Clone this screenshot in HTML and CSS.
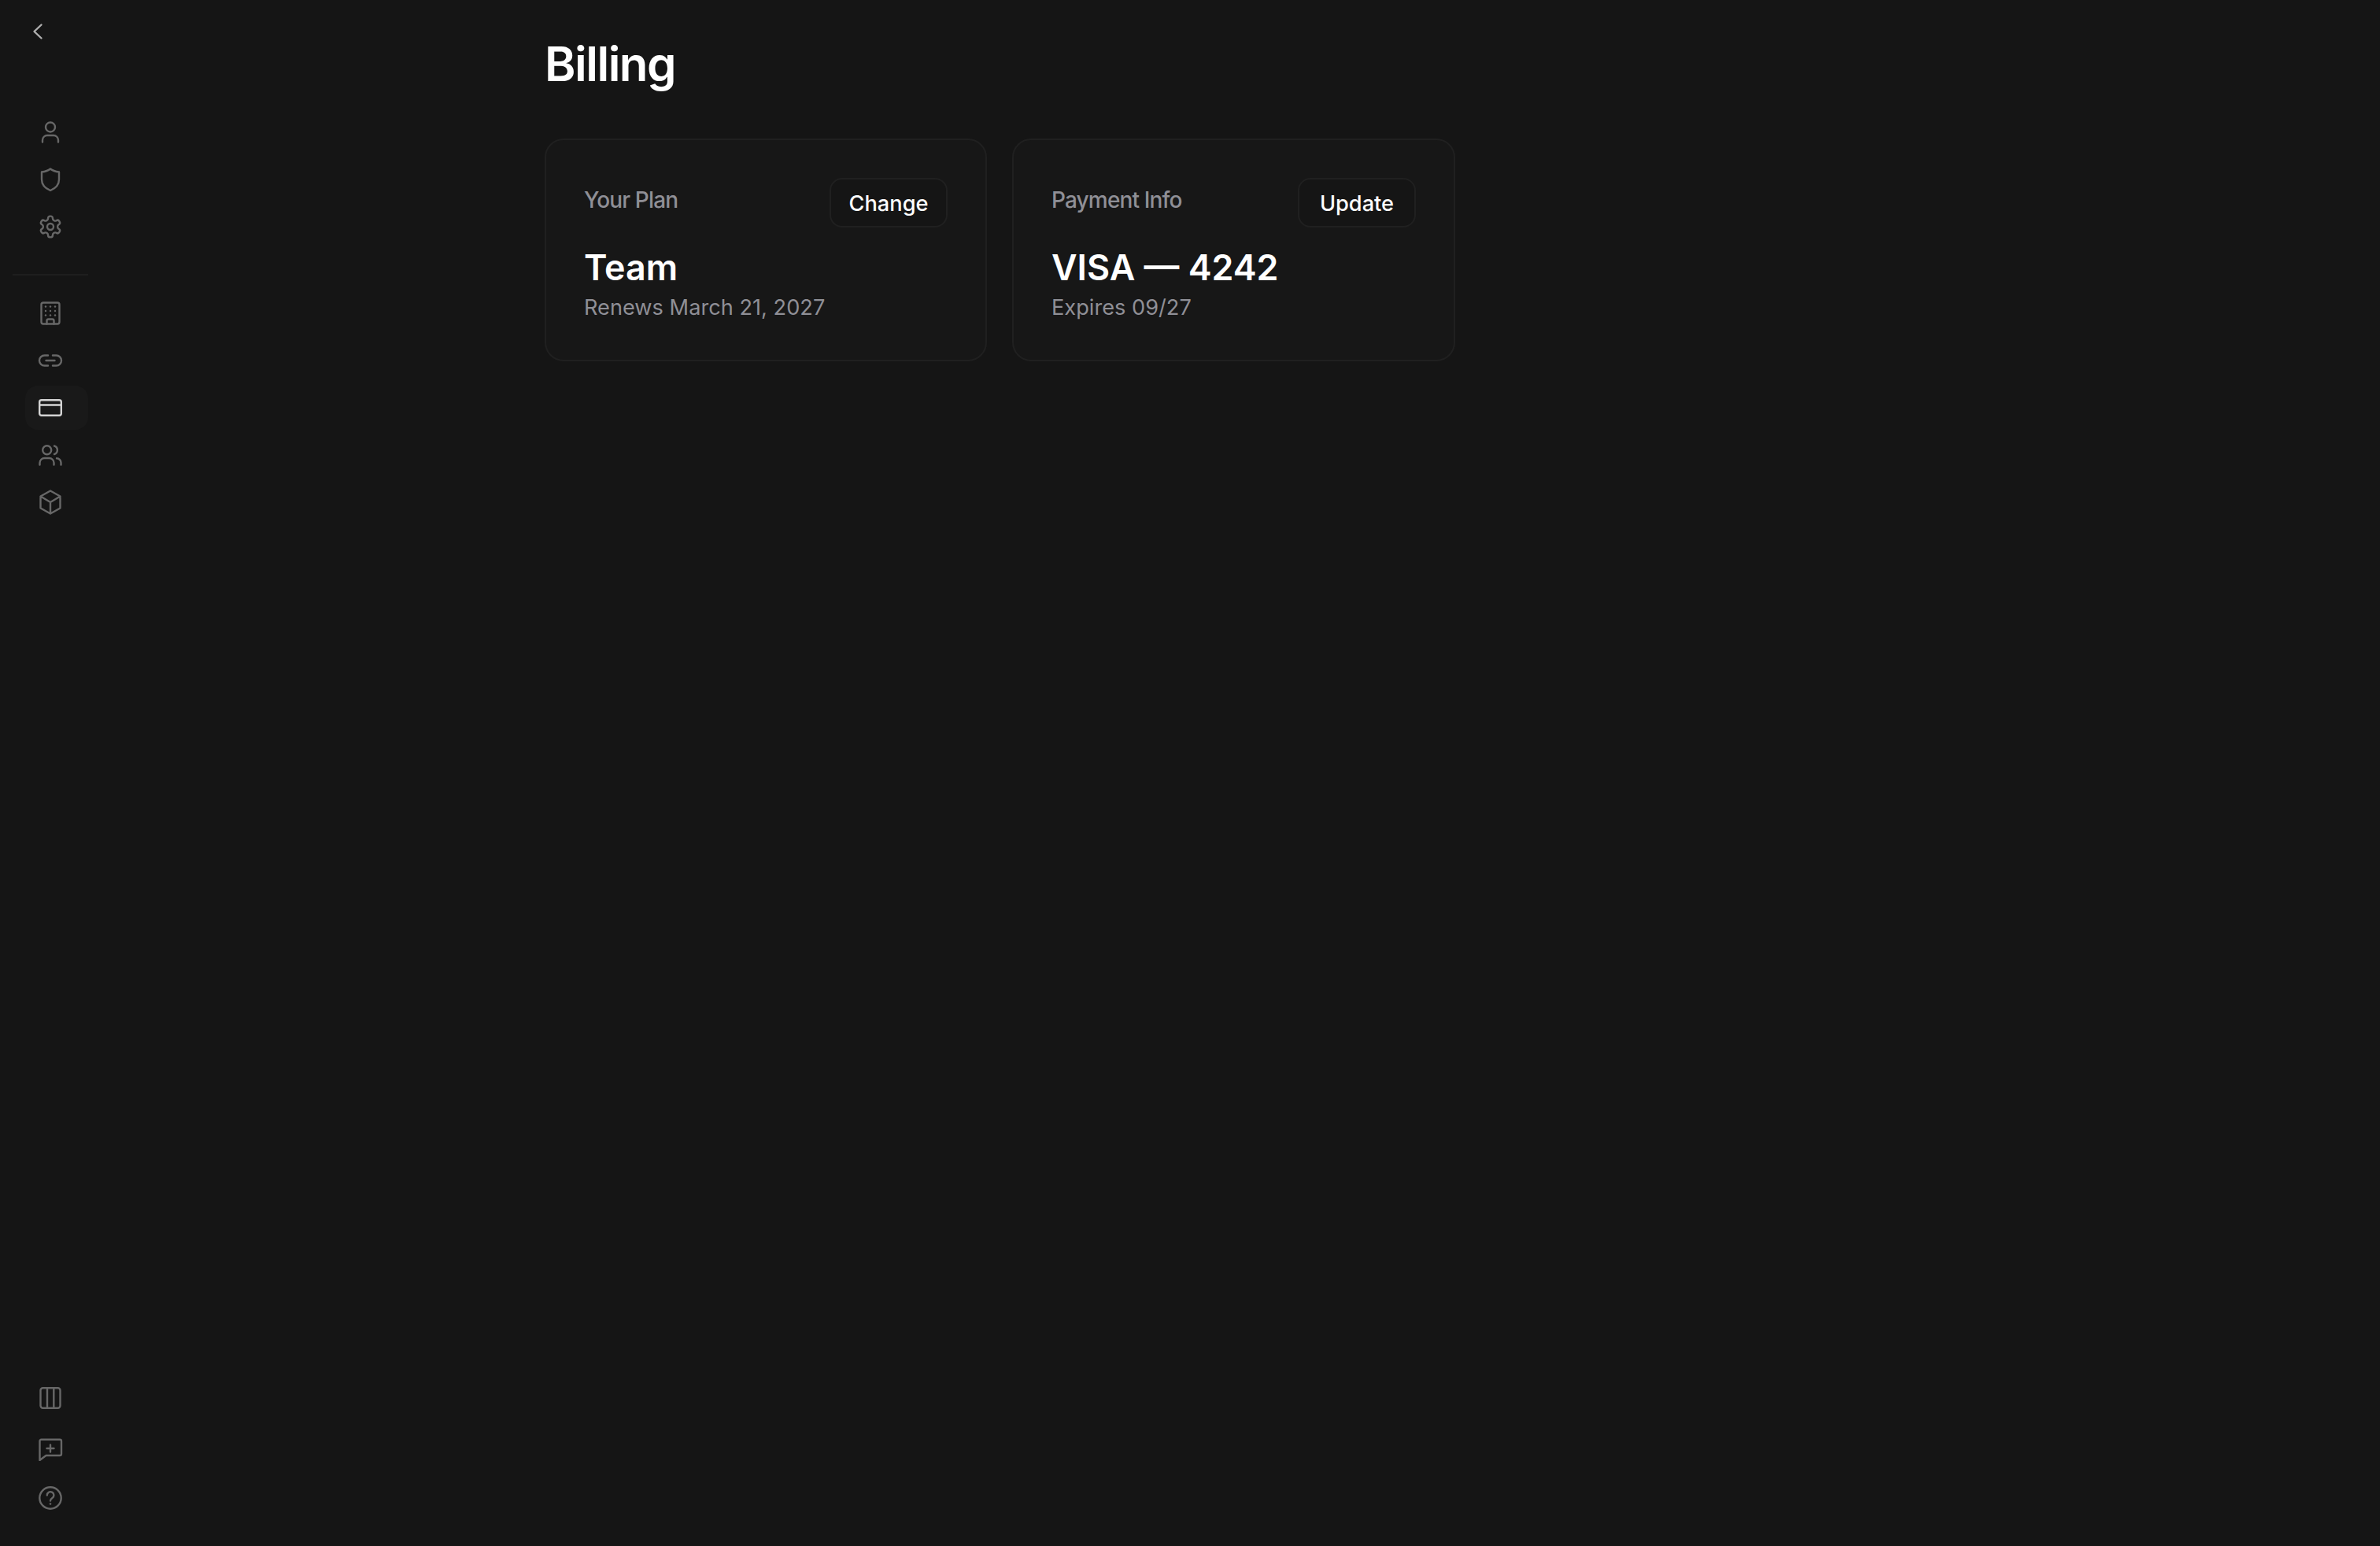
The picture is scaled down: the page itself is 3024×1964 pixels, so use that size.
FILE: index.html
```html
<!DOCTYPE html>
<html lang="en">
<head>
  <meta charset="UTF-8" />
  <title>Billing</title>
  <link rel="stylesheet" href="styles.css">
</head>
<body>
  <!-- sidebar -->
  <aside class="sidebar">
    <a class="back" href="#" aria-label="Back">
      <svg class="ico" viewBox="0 0 32 32"><path d="M20.5 7.5 11.5 16l9 8.5"/></svg>
    </a>

    <nav class="nav-group first">
      <a class="nav-item" href="#" aria-label="Profile">
        <svg class="ico" viewBox="0 0 32 32"><circle cx="16" cy="9.5" r="6"/><path d="M6 28.5V26a6 6 0 0 1 6-6h8a6 6 0 0 1 6 6v2.5"/></svg>
      </a>
      <a class="nav-item" href="#" aria-label="Security">
        <svg class="ico" viewBox="0 0 32 32"><path d="M16 2.5C19 5 23 6 27 6.5V16c0 7-5 11.500-11 14C10 27.500 5 23 5 16V6.500C9 6 13 5 16 2.500Z"/></svg>
      </a>
      <a class="nav-item" href="#" aria-label="Settings">
        <svg class="ico gear" viewBox="0 0 24 24"><path d="M12.220 2h-.44a2 2 0 0 0-2 2v.18a2 2 0 0 1-1 1.730l-.43.25a2 2 0 0 1-2 0l-.15-.08a2 2 0 0 0-2.730.73l-.22.38a2 2 0 0 0 .73 2.730l.15.1a2 2 0 0 1 1 1.720v.51a2 2 0 0 1-1 1.740l-.15.09a2 2 0 0 0-.73 2.730l.22.38a2 2 0 0 0 2.730.73l.15-.08a2 2 0 0 1 2 0l.43.25a2 2 0 0 1 1 1.730V20a2 2 0 0 0 2 2h.44a2 2 0 0 0 2-2v-.18a2 2 0 0 1 1-1.730l.43-.25a2 2 0 0 1 2 0l.15.08a2 2 0 0 0 2.730-.73l.22-.39a2 2 0 0 0-.73-2.730l-.15-.08a2 2 0 0 1-1-1.740v-.5a2 2 0 0 1 1-1.740l.15-.09a2 2 0 0 0 .73-2.730l-.22-.38a2 2 0 0 0-2.730-.73l-.15.08a2 2 0 0 1-2 0l-.43-.25a2 2 0 0 1-1-1.730V4a2 2 0 0 0-2-2z"/><circle cx="12" cy="12" r="3"/></svg>
      </a>
    </nav>

    <div class="divider"></div>

    <nav class="nav-group">
      <a class="nav-item" href="#" aria-label="Organization">
        <svg class="ico" viewBox="0 0 32 32">
          <rect x="4.500" y="2.500" width="23" height="27" rx="2.500"/>
          <path d="M11.500 29.500v-4a2 2 0 0 1 2-2h5a2 2 0 0 1 2 2v4"/>
          <g class="dots">
            <circle cx="10" cy="7.500" r="1.200"/><circle cx="16" cy="7.500" r="1.200"/><circle cx="22" cy="7.500" r="1.200"/>
            <circle cx="10" cy="13" r="1.200"/><circle cx="16" cy="13" r="1.200"/><circle cx="22" cy="13" r="1.200"/>
            <circle cx="10" cy="18.500" r="1.200"/><circle cx="16" cy="18.500" r="1.200"/><circle cx="22" cy="18.500" r="1.200"/>
          </g>
        </svg>
      </a>
      <a class="nav-item" href="#" aria-label="Integrations">
        <svg class="ico" viewBox="0 0 32 32"><path d="M13 9.500H8.500a6.500 6.500 0 0 0 0 13H13M19 9.500h4.500a6.500 6.500 0 0 1 0 13H19M10.500 16h11"/></svg>
      </a>
      <a class="nav-item active" href="#" aria-label="Billing">
        <svg class="ico" viewBox="0 0 32 32"><rect x="2.200" y="6.200" width="27.600" height="19.600" rx="2.500"/><path d="M2.200 12.500h27.600"/></svg>
      </a>
      <a class="nav-item" href="#" aria-label="Members">
        <svg class="ico" viewBox="0 0 32 32"><circle cx="11.700" cy="9.700" r="5.500"/><path d="M2.500 28.500V26a6 6 0 0 1 6-6h6a6 6 0 0 1 6 6v2.500M21 4.500a5.500 5.500 0 0 1 0 10.500M24 20.300a5.500 5.500 0 0 1 5.500 5.500v2.700"/></svg>
      </a>
      <a class="nav-item" href="#" aria-label="Apps">
        <svg class="ico" viewBox="0 0 32 32"><path d="M16 1.500 28.500 8.500v15L16 30.500 3.500 23.500v-15ZM3.500 8.500 16 16l12.500-7.500M16 16v14.500"/></svg>
      </a>
    </nav>

    <nav class="nav-group bottom">
      <a class="nav-item" href="#" aria-label="Layout">
        <svg class="ico" viewBox="0 0 32 32"><rect x="3.500" y="3.200" width="25" height="25.600" rx="3"/><path d="M12 3.200v25.600M20.300 3.200v25.600"/></svg>
      </a>
      <a class="nav-item" href="#" aria-label="Feedback">
        <svg class="ico" viewBox="0 0 32 32"><path d="M4.500 4.700H28a2 2 0 0 1 2 2V23a2 2 0 0 1-2 2H10.500L2.500 31V6.700a2 2 0 0 1 2-2ZM16 11.500v9M11.500 16h9"/></svg>
      </a>
      <a class="nav-item" href="#" aria-label="Help">
        <svg class="ico" viewBox="0 0 32 32"><circle cx="16" cy="16" r="13.700"/><path d="M11.800 12.500a4.300 4.300 0 1 1 6.700 3.500c-1.500 1-2.500 1.700-2.500 3.500"/><circle class="dot" cx="16" cy="23.500" r="1.300"/></svg>
      </a>
    </nav>
  </aside>

  <main class="content">
    <h1>Billing</h1>

    <div class="cards">
      <!-- plan -->
      <section class="card">
        <div class="card-head">
          <span class="card-label">Your Plan</span>
          <button class="card-btn">Change</button>
        </div>
        <div class="card-value">Team</div>
        <div class="card-sub">Renews March 21, 2027</div>
      </section>

      <!-- payment -->
      <section class="card">
        <div class="card-head">
          <span class="card-label">Payment Info</span>
          <button class="card-btn">Update</button>
        </div>
        <div class="card-value">VISA — 4242</div>
        <div class="card-sub">Expires 09/27</div>
      </section>
    </div>
  </main>
</body>
</html>
```

FILE: styles.css
```css
* { box-sizing: border-box; }

body {
  margin: 0;
  height: 100vh;
  display: flex;
  overflow: hidden;
  background: #151515;
  color: #fff;
  font-family: Inter, "Liberation Sans", sans-serif;
}

/* sidebar */
.sidebar {
  width: 128px;
  flex: none;
  display: flex;
  flex-direction: column;
  padding: 24px 16px 33px 32px;
}

.ico {
  width: 32px;
  height: 32px;
  fill: none;
  stroke: currentColor;
  stroke-width: 2.4;
  stroke-linecap: round;
  stroke-linejoin: round;
}
.ico.gear { stroke-width: 1.8; }
.ico .dots, .ico .dot { fill: currentColor; stroke: none; }

.back {
  display: flex;
  color: #b0b0b0;
  height: 32px;
  margin-bottom: 84px;
}

.nav-group { display: flex; flex-direction: column; gap: 4px; }
.nav-group.bottom { margin-top: auto; gap: 7.5px; }

.nav-item {
  display: flex;
  align-items: center;
  height: 56px;
  width: 80px;
  padding-left: 16px;
  border-radius: 16px;
  color: #676767;
}
.nav-item.active {
  background: #191919;
  color: #d4d4d4;
}

.divider {
  height: 2px;
  width: 96px;
  margin: 32px 0 20px -16px;
  background: #1e1e1e;
}

/* content */
.content {
  width: 1157px;
  margin-left: 564px;
  padding-top: 41px;
}

h1 {
  margin: 0;
  font-size: 60px;
  line-height: 80px;
  font-weight: 600;
  letter-spacing: -1.5px;
}

.cards {
  display: grid;
  grid-template-columns: 562px 563px;
  gap: 32px;
  margin-top: 55px;
}

.card {
  height: 283px;
  padding: 48px;
  background: #171717;
  border: 2px solid #202020;
  border-radius: 24px;
}

.card-head {
  display: flex;
  justify-content: space-between;
  align-items: flex-start;
}

.card-label {
  margin-top: 8px;
  font-size: 28px;
  line-height: 40px;
  font-weight: 500;
  letter-spacing: -0.85px;
  color: #8f8f96;
}

.card-btn {
  width: 150px;
  height: 63px;
  padding: 2px 0 0;
  background: #151515;
  border: 2px solid #202020;
  border-radius: 16px;
  color: #fff;
  font-family: inherit;
  font-size: 27.2px;
  font-weight: 450;
}

.card-value {
  margin-top: 23px;
  font-size: 44.8px;
  line-height: 56px;
  font-weight: 600;
}

.card-sub {
  margin-top: 3px;
  font-size: 27.2px;
  line-height: 40px;
  color: #8f8f96;
}
```
